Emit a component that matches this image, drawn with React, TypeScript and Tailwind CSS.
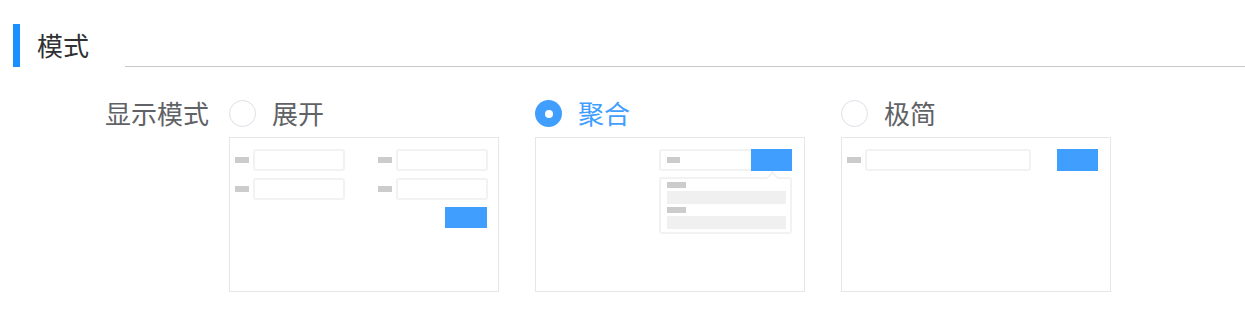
const font = "font-['Noto_Sans_CJK_SC','Noto_Sans',sans-serif]"

function Bar({ w = 'w-[14px]' }: { w?: string }) {
  return <div className={`${w} h-[6px] shrink-0 bg-[#cccccc]`} />
}

function Input({ w }: { w: string }) {
  return <div className={`${w} h-[22px] shrink-0 rounded-[3px] border-2 border-[#f2f2f2] bg-white`} />
}

function Radio({ checked }: { checked?: boolean }) {
  if (checked) {
    return (
      <div className="flex h-[27px] w-[27px] items-center justify-center rounded-full bg-[#409eff]">
        <div className="h-[8px] w-[8px] rounded-full bg-white" />
      </div>
    )
  }
  return <div className="h-[27px] w-[27px] rounded-full border border-[#dcdfe6] bg-white" />
}

function Option({
  label,
  checked,
  children,
}: {
  label: string
  checked?: boolean
  children: React.ReactNode
}) {
  return (
    <div className="flex flex-col">
      <div className="flex h-[27px] items-center gap-[16px]">
        <Radio checked={checked} />
        <span className={`pb-[3px] text-[26px] leading-[27px] ${checked ? 'text-[#409eff]' : 'text-[#606266]'}`}>
          {label}
        </span>
      </div>
      <div className="mt-[10px] h-[155px] w-[270px] border border-[#e6e6e6] bg-white">{children}</div>
    </div>
  )
}

export default function App() {
  return (
    <div className={`h-[331px] w-full bg-white ${font}`}>
      <div className="flex items-stretch pt-6 pl-[13px]">
        <div className="h-[43px] w-[7px] bg-[#1890ff]" />
        <div className="ml-[17px] flex items-center pb-[1px] text-[26px] leading-none text-[#303133]">模式</div>
        <div className="ml-[36px] h-px flex-1 self-end bg-[#c8c8c8]" />
      </div>

      <div className="mt-[33px] flex items-start">
        <div className="flex h-[27px] w-[209px] items-center justify-end pb-[3px] text-[26px] text-[#606266]">
          显示模式
        </div>
        <div className="ml-[20px] flex gap-[36px]">
          <Option label="展开">
            <div className="flex flex-col pt-[11px] pr-[10px] pl-[5px]">
              <div className="flex justify-between">
                <div className="flex items-center gap-[4px]">
                  <Bar />
                  <Input w="w-[92px]" />
                </div>
                <div className="flex items-center gap-[4px]">
                  <Bar />
                  <Input w="w-[92px]" />
                </div>
              </div>
              <div className="mt-[7px] flex justify-between">
                <div className="flex items-center gap-[4px]">
                  <Bar />
                  <Input w="w-[92px]" />
                </div>
                <div className="flex items-center gap-[4px]">
                  <Bar />
                  <Input w="w-[92px]" />
                </div>
              </div>
              <div className="mt-[7px] flex justify-end">
                <div className="mr-px h-[21px] w-[42px] bg-[#409eff]" />
              </div>
            </div>
          </Option>

          <Option label="聚合" checked>
            <div className="flex flex-col items-end pt-[11px] pr-[12px]">
              <div className="flex h-[22px] w-[133px]">
                <div className="flex flex-1 items-center rounded-l-[3px] border-2 border-r-0 border-[#f2f2f2] pl-[6px]">
                  <Bar w="w-[13px]" />
                </div>
                <div className="w-[41px] bg-[#409eff]" />
              </div>
              <div className="relative mt-[6px] h-[57px] w-[133px] rounded-[3px] border-2 border-[#f2f2f2] bg-white pt-[3px] pl-[6px]">
                <div className="absolute -top-[6px] right-[13px] h-[9px] w-[9px] rotate-45 border-t-2 border-l-2 border-[#f2f2f2] bg-white" />
                <Bar w="w-[19px]" />
                <div className="mt-[3px] h-[13px] w-[119px] bg-[#f0f0f0]" />
                <div className="mt-[3px]">
                  <Bar w="w-[19px]" />
                </div>
                <div className="mt-[3px] h-[13px] w-[119px] bg-[#f0f0f0]" />
              </div>
            </div>
          </Option>

          <Option label="极简">
            <div className="flex items-center pt-[11px] pr-[12px] pl-[5px]">
              <Bar />
              <div className="ml-[4px]">
                <Input w="w-[166px]" />
              </div>
              <div className="ml-auto h-[22px] w-[41px] bg-[#409eff]" />
            </div>
          </Option>
        </div>
      </div>
    </div>
  )
}
